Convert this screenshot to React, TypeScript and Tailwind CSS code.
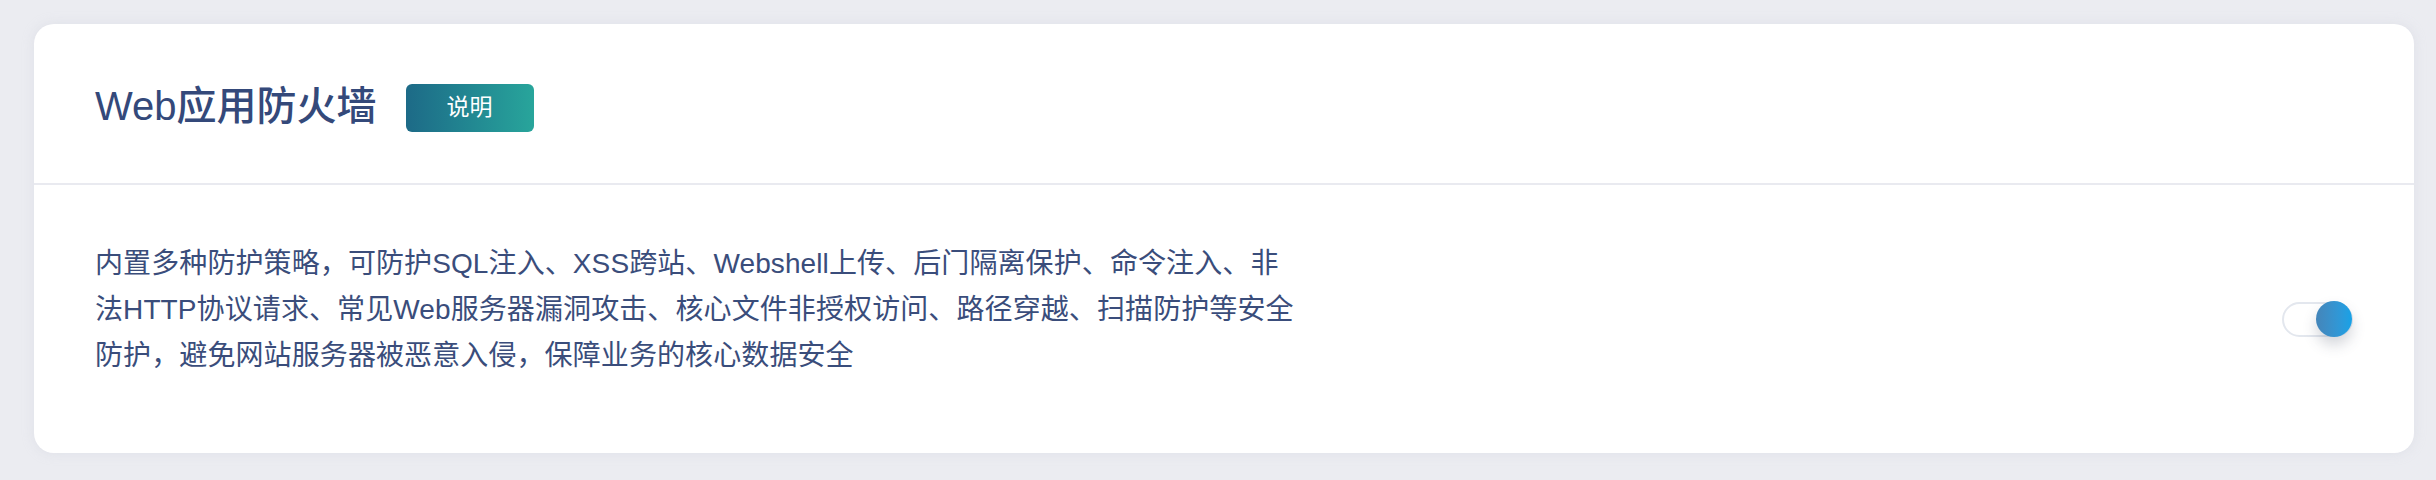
import { useState } from "react";

const fontStack = "font-['Helvetica_Neue','Liberation_Sans','Noto_Sans_CJK_SC',sans-serif]";

const descLines = [
    "内置多种防护策略，可防护SQL注入、XSS跨站、Webshell上传、后门隔离保护、命令注入、非",
    "法HTTP协议请求、常见Web服务器漏洞攻击、核心文件非授权访问、路径穿越、扫描防护等安全",
    "防护，避免网站服务器被恶意入侵，保障业务的核心数据安全",
];

const Toggle = ({ on, onChange }: { on: boolean; onChange: (v: boolean) => void }) => (
    <button
        type="button"
        onClick={() => onChange(!on)}
        className="relative w-[71px] h-[35px] rounded-full border-2 border-[#e3e7ee] bg-white shrink-0"
    >
        <span
            className={`absolute top-1/2 -translate-y-1/2 w-[36px] h-[36px] rounded-full bg-gradient-to-r from-[#4485b9] to-[#15a2e7] shadow-[0_8px_14px_rgba(60,70,90,0.22)] ${
                on ? "right-[-1px]" : "left-[-1px]"
            }`}
        />
    </button>
);

export default function App() {
    const [enabled, setEnabled] = useState(true);

    return (
        <div className={`w-full h-[480px] bg-[#ebecf1] pt-[24px] pl-[34px] pr-[22px] pb-[27px] ${fontStack}`}>
            <div className="h-full bg-white rounded-[20px] shadow-[0_0_12px_rgba(200,203,215,0.35)] flex flex-col">
                <div className="h-[161px] flex items-center px-[61px] pt-[4px] gap-[29px] border-b-2 border-[#e9eaf0] shrink-0">
                    <h1 className="text-[40px] font-medium text-[#34497a] leading-none">
                        Web应用防火墙
                    </h1>
                    <button
                        type="button"
                        className="w-[128px] h-[48px] mt-[4px] rounded-[6px] bg-gradient-to-r from-[#1d6a87] to-[#28a59b] text-white text-[23px] font-normal"
                    >
                        说明
                    </button>
                </div>
                <div className="flex-1 flex items-center justify-between px-[61px]">
                    <p className="text-[28px] leading-[46px] tracking-[0.1px] text-[#3a4d7b] -mt-[18px]">
                        {descLines.map((line) => (
                            <span key={line} className="block whitespace-nowrap">
                                {line}
                            </span>
                        ))}
                    </p>
                    <Toggle on={enabled} onChange={setEnabled} />
                </div>
            </div>
        </div>
    );
}
